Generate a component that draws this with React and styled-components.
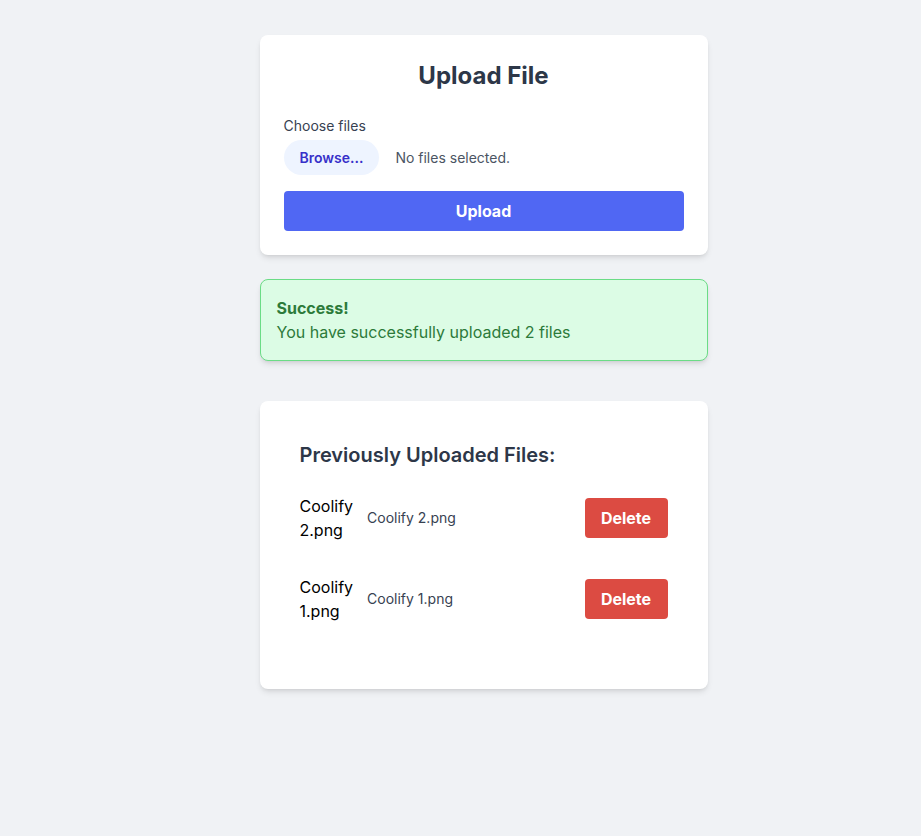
import React from 'react';
import styled, { createGlobalStyle } from 'styled-components';

const GlobalStyle = createGlobalStyle`
    * { box-sizing: border-box; }
    body {
        margin: 0;
        background: #f0f2f5;
        font-family: Inter, "Noto Sans", sans-serif;
        color: #1f2937;
    }
`;

const Page = styled.div`
    min-height: 836px;
    display: flex;
    flex-direction: column;
    align-items: center;
    padding: 35px 0 0 46px;
`;

const Column = styled.div`
    width: 448px;
    display: flex;
    flex-direction: column;
`;

const Card = styled.div`
    background: #fff;
    border-radius: 8px;
    box-shadow: 0 4px 6px -1px rgba(0, 0, 0, 0.1), 0 2px 4px -2px rgba(0, 0, 0, 0.1);
    padding: ${p => p.$pad || 24}px;
    margin-bottom: ${p => p.$mb || 0}px;
`;

const Title = styled.h1`
    margin: 0 0 23px;
    text-align: center;
    font-size: 24px;
    line-height: 34px;
    font-weight: 700;
    color: #2d3748;
`;

const Label = styled.label`
    display: block;
    font-size: 14px;
    line-height: 20px;
    color: #374151;
    margin-bottom: 4px;
`;

const FileRow = styled.div`
    display: flex;
    align-items: center;
    gap: 16px;
    margin-bottom: 16px;
`;

const Browse = styled.button`
    border: none;
    background: #eef4ff;
    color: #3730c9;
    border-radius: 999px;
    padding: 8px 16px;
    height: 35px;
    font-family: inherit;
    font-size: 14px;
    line-height: 19px;
    font-weight: 600;
    cursor: pointer;
`;

const Hint = styled.span`
    font-size: 14px;
    color: #4b5563;
`;

const PrimaryButton = styled.button`
    width: 100%;
    height: 40px;
    border: none;
    border-radius: 4px;
    background: #5067f3;
    color: #fff;
    font-family: inherit;
    font-size: 16px;
    font-weight: 700;
    cursor: pointer;
`;

const Alert = styled.div`
    background: #dcfce5;
    border: 1px solid #6bdc86;
    border-radius: 8px;
    box-shadow: 0 4px 6px -1px rgba(0, 0, 0, 0.1), 0 2px 4px -2px rgba(0, 0, 0, 0.1);
    padding: 16px;
    color: #2c7a3a;
    font-size: 16px;
    line-height: 24px;
    margin-bottom: 40px;
`;

const AlertTitle = styled.strong`
    display: block;
    font-weight: 700;
`;

const ListTitle = styled.h2`
    margin: 0 0 25px;
    font-size: 20px;
    line-height: 28px;
    font-weight: 600;
    color: #2d3748;
`;

const FileList = styled.ul`
    list-style: none;
    margin: 0 0 26px;
    padding: 0;
    display: flex;
    flex-direction: column;
    gap: 33px;
`;

const FileItem = styled.li`
    display: flex;
    align-items: center;
    justify-content: space-between;
`;

const FileInfo = styled.div`
    display: flex;
    align-items: center;
    gap: 14px;
`;

const FileName = styled.span`
    width: min-content;
    font-size: 16px;
    line-height: 24px;
    color: #000;
`;

const FileMeta = styled.span`
    font-size: 14px;
    line-height: 20px;
    color: #374151;
`;

const DeleteButton = styled.button`
    width: 83px;
    height: 40px;
    border: none;
    border-radius: 4px;
    background: #dc4b42;
    color: #fff;
    font-family: inherit;
    font-size: 16px;
    font-weight: 700;
    cursor: pointer;
`;

const files = ['Coolify 2.png', 'Coolify 1.png'];

export default function App() {
    return (
        <>
            <GlobalStyle />
            <Page>
                <Column>
                    <Card $mb={24}>
                        <Title>Upload File</Title>
                        <Label>Choose files</Label>
                        <FileRow>
                            <Browse type="button">Browse...</Browse>
                            <Hint>No files selected.</Hint>
                        </FileRow>
                        <PrimaryButton type="button">Upload</PrimaryButton>
                    </Card>

                    <Alert>
                        <AlertTitle>Success!</AlertTitle>
                        You have successfully uploaded 2 files
                    </Alert>

                    <Card $pad={40}>
                        <ListTitle>Previously Uploaded Files:</ListTitle>
                        <FileList>
                            {files.map(name => (
                                <FileItem key={name}>
                                    <FileInfo>
                                        <FileName>{name}</FileName>
                                        <FileMeta>{name}</FileMeta>
                                    </FileInfo>
                                    <DeleteButton type="button">Delete</DeleteButton>
                                </FileItem>
                            ))}
                        </FileList>
                    </Card>
                </Column>
            </Page>
        </>
    );
}
